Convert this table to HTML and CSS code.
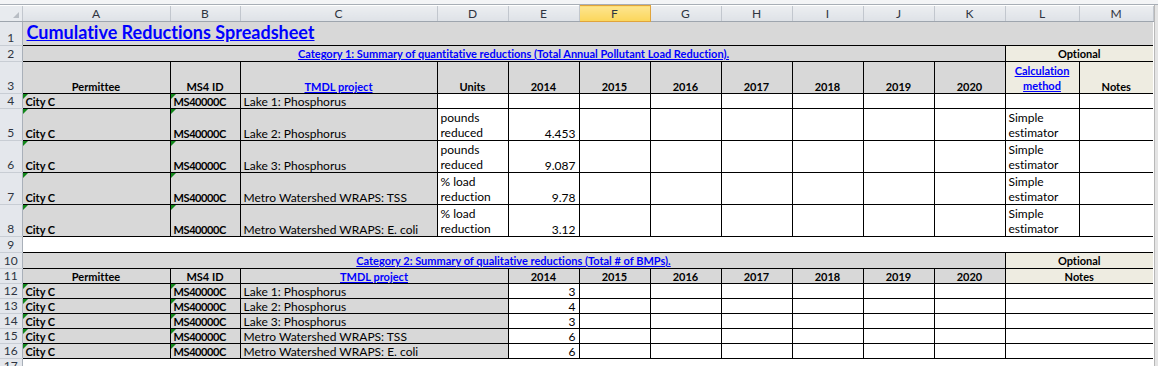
FILE: index.html
```html
<!DOCTYPE html>
<html lang="en">
  <head>
    <meta charset="UTF-8" />
    <title>Cumulative Reductions Spreadsheet</title>
    <link rel="stylesheet" href="styles.css">
  </head>
  <body>
    <div class="topbar"></div>
    <div class="workspace">
      <table class="sheet">
        <colgroup>
          <col class="w-rh"><col class="w-a"><col class="w-b"><col class="w-c">
          <col class="w-yr"><col class="w-yr"><col class="w-yr"><col class="w-yr">
          <col class="w-yr"><col class="w-yr"><col class="w-yr"><col class="w-yr">
          <col class="w-l"><col class="w-m">
        </colgroup>
        <tr class="colhead">
          <th class="corner"></th>
          <th>A</th><th>B</th><th>C</th><th>D</th><th>E</th>
          <th class="sel">F</th><th>G</th><th>H</th><th>I</th>
          <th>J</th><th>K</th><th>L</th><th>M</th>
        </tr>

        <!-- category 1 -->
        <tr class="h24">
          <th class="rh">1</th>
          <td colspan="13" class="g title"><a>Cumulative Reductions Spreadsheet</a></td>
        </tr>
        <tr class="h16">
          <th class="rh">2</th>
          <td colspan="11" class="g bx c mid bold"><a>Category 1: Summary of quantitative reductions (Total Annual Pollutant Load Reduction).</a></td>
          <td colspan="2" class="o bx c mid bold last">Optional</td>
        </tr>
        <tr class="h32">
          <th class="rh">3</th>
          <td class="g bx c bold">Permittee</td>
          <td class="g bx c bold">MS4 ID</td>
          <td class="g bx c bold"><a>TMDL project</a></td>
          <td class="g bx c bold">Units</td>
          <td class="g bx c bold">2014</td>
          <td class="g bx c bold">2015</td>
          <td class="g bx c bold">2016</td>
          <td class="g bx c bold">2017</td>
          <td class="g bx c bold">2018</td>
          <td class="g bx c bold">2019</td>
          <td class="g bx c bold">2020</td>
          <td class="o bx c bold wrap"><a>Calculation method</a></td>
          <td class="o bx c bold last">Notes</td>
        </tr>
        <tr class="h15">
          <th class="rh">4</th>
          <td class="g bx bold tri">City C</td>
          <td class="g bx bold tri id">MS40000C</td>
          <td class="g bx">Lake 1: Phosphorus</td>
          <td class="bx"></td><td class="bx"></td><td class="bx"></td><td class="bx"></td>
          <td class="bx"></td><td class="bx"></td><td class="bx"></td><td class="bx"></td>
          <td class="bx"></td><td class="bx last"></td>
        </tr>
        <tr class="h32">
          <th class="rh">5</th>
          <td class="g bx bold tri">City C</td>
          <td class="g bx bold tri id">MS40000C</td>
          <td class="g bx">Lake 2: Phosphorus</td>
          <td class="bx wrap">pounds reduced</td>
          <td class="bx r">4.453</td>
          <td class="bx"></td><td class="bx"></td><td class="bx"></td>
          <td class="bx"></td><td class="bx"></td><td class="bx"></td>
          <td class="bx wrap">Simple estimator</td><td class="bx last"></td>
        </tr>
        <tr class="h32">
          <th class="rh">6</th>
          <td class="g bx bold tri">City C</td>
          <td class="g bx bold tri id">MS40000C</td>
          <td class="g bx">Lake 3: Phosphorus</td>
          <td class="bx wrap">pounds reduced</td>
          <td class="bx r">9.087</td>
          <td class="bx"></td><td class="bx"></td><td class="bx"></td>
          <td class="bx"></td><td class="bx"></td><td class="bx"></td>
          <td class="bx wrap">Simple estimator</td><td class="bx last"></td>
        </tr>
        <tr class="h32">
          <th class="rh">7</th>
          <td class="g bx bold tri">City C</td>
          <td class="g bx bold tri id">MS40000C</td>
          <td class="g bx">Metro Watershed WRAPS: TSS</td>
          <td class="bx wrap">% load reduction</td>
          <td class="bx r">9.78</td>
          <td class="bx"></td><td class="bx"></td><td class="bx"></td>
          <td class="bx"></td><td class="bx"></td><td class="bx"></td>
          <td class="bx wrap">Simple estimator</td><td class="bx last"></td>
        </tr>
        <tr class="h32">
          <th class="rh">8</th>
          <td class="g bx bold tri">City C</td>
          <td class="g bx bold tri id">MS40000C</td>
          <td class="g bx">Metro Watershed WRAPS: E. coli</td>
          <td class="bx wrap">% load reduction</td>
          <td class="bx r">3.12</td>
          <td class="bx"></td><td class="bx"></td><td class="bx"></td>
          <td class="bx"></td><td class="bx"></td><td class="bx"></td>
          <td class="bx wrap">Simple estimator</td><td class="bx last"></td>
        </tr>
        <tr class="h16">
          <th class="rh">9</th>
          <td colspan="13"></td>
        </tr>

        <!-- category 2 -->
        <tr class="h16">
          <th class="rh">10</th>
          <td colspan="11" class="g bx c mid bold"><a>Category 2: Summary of qualitative reductions (Total # of BMPs).</a></td>
          <td colspan="2" class="o bx c mid bold last">Optional</td>
        </tr>
        <tr class="h15">
          <th class="rh">11</th>
          <td class="g bx c bold">Permittee</td>
          <td class="g bx c bold">MS4 ID</td>
          <td colspan="2" class="g bx c bold"><a>TMDL project</a></td>
          <td class="g bx c bold">2014</td>
          <td class="g bx c bold">2015</td>
          <td class="g bx c bold">2016</td>
          <td class="g bx c bold">2017</td>
          <td class="g bx c bold">2018</td>
          <td class="g bx c bold">2019</td>
          <td class="g bx c bold">2020</td>
          <td colspan="2" class="o bx c bold last">Notes</td>
        </tr>
        <tr class="h15">
          <th class="rh">12</th>
          <td class="g bx bold tri">City C</td>
          <td class="g bx bold tri id">MS40000C</td>
          <td colspan="2" class="g bx">Lake 1: Phosphorus</td>
          <td class="bx r">3</td>
          <td class="bx"></td><td class="bx"></td><td class="bx"></td>
          <td class="bx"></td><td class="bx"></td><td class="bx"></td>
          <td colspan="2" class="bx last"></td>
        </tr>
        <tr class="h15">
          <th class="rh">13</th>
          <td class="g bx bold tri">City C</td>
          <td class="g bx bold tri id">MS40000C</td>
          <td colspan="2" class="g bx">Lake 2: Phosphorus</td>
          <td class="bx r">4</td>
          <td class="bx"></td><td class="bx"></td><td class="bx"></td>
          <td class="bx"></td><td class="bx"></td><td class="bx"></td>
          <td colspan="2" class="bx last"></td>
        </tr>
        <tr class="h15">
          <th class="rh">14</th>
          <td class="g bx bold tri">City C</td>
          <td class="g bx bold tri id">MS40000C</td>
          <td colspan="2" class="g bx">Lake 3: Phosphorus</td>
          <td class="bx r">3</td>
          <td class="bx"></td><td class="bx"></td><td class="bx"></td>
          <td class="bx"></td><td class="bx"></td><td class="bx"></td>
          <td colspan="2" class="bx last"></td>
        </tr>
        <tr class="h15">
          <th class="rh">15</th>
          <td class="g bx bold tri">City C</td>
          <td class="g bx bold tri id">MS40000C</td>
          <td colspan="2" class="g bx">Metro Watershed WRAPS: TSS</td>
          <td class="bx r">6</td>
          <td class="bx"></td><td class="bx"></td><td class="bx"></td>
          <td class="bx"></td><td class="bx"></td><td class="bx"></td>
          <td colspan="2" class="bx last"></td>
        </tr>
        <tr class="h15">
          <th class="rh">16</th>
          <td class="g bx bold tri">City C</td>
          <td class="g bx bold tri id">MS40000C</td>
          <td colspan="2" class="g bx">Metro Watershed WRAPS: E. coli</td>
          <td class="bx r">6</td>
          <td class="bx"></td><td class="bx"></td><td class="bx"></td>
          <td class="bx"></td><td class="bx"></td><td class="bx"></td>
          <td colspan="2" class="bx last"></td>
        </tr>
        <tr class="h15">
          <th class="rh">17</th>
          <td colspan="13"></td>
        </tr>
      </table>
      <div class="side"></div>
    </div>
  </body>
</html>
```

FILE: styles.css
```css
body {
  margin: 0;
  background: #fff;
  font-family: Lato, "Liberation Sans", sans-serif;
  font-variant-ligatures: none;
  overflow: hidden;
}

.topbar {
  height: 4px;
  background: #f3f4f6;
  border-bottom: 1px solid #a8aeb6;
}

.workspace {
  display: flex;
}

.side {
  flex: 1;
  background: #e4e4e4;
  border-left: 1px solid #b8b8b8;
}

.sheet {
  width: 1153px;
  table-layout: fixed;
  border-collapse: collapse;
  font-size: 12px;
  color: #000;
}

.w-rh { width: 22px; }
.w-a { width: 148px; }
.w-b { width: 70px; }
.w-c { width: 197px; }
.w-yr { width: 71px; }
.w-l { width: 74px; }
.w-m { width: 74px; }

/* headers */
.colhead th {
  height: 15px;
  padding: 0;
  font-weight: normal;
  font-size: 12px;
  color: #2e3440;
  background: linear-gradient(#eceef1, #dee2e7);
  border-right: 1px solid #c2c7ce;
  border-bottom: 1px solid #9ea5ae;
  text-align: center;
  vertical-align: middle;
}

.colhead th.sel {
  background: linear-gradient(#fde58f, #fbd65a);
  border: 1px solid #e0a43c;
}

.colhead th.corner {
  position: relative;
  background: #e8ebef;
}

.corner::after {
  content: "";
  position: absolute;
  right: 3px;
  bottom: 3px;
  border-bottom: 6px solid #b8bdc4;
  border-left: 6px solid transparent;
}

.rh {
  padding: 0 0 1px 0;
  font-weight: normal;
  font-size: 12px;
  line-height: 13px;
  color: #2e3440;
  background: #e4e7ec;
  border-right: 1px solid #a9b0b9;
  border-bottom: 1px solid #c8cdd4;
  text-align: center;
  vertical-align: bottom;
}

/* rows */
.h15 { height: 15px; }
.h16 { height: 16px; }
.h24 { height: 24px; }
.h32 { height: 32px; }

td {
  padding: 0 3px;
  white-space: nowrap;
  overflow: hidden;
  vertical-align: bottom;
  line-height: 13px;
  position: relative;
}

td.g { background: #d8d8d8; }
td.o { background: #eeece1; }
td.bx { border: 1px solid #000; }
td.last { border-right: none; }
td.c { text-align: center; }
td.r { text-align: right; }
td.mid { vertical-align: middle; }

td.bold {
  font-weight: bold;
  font-size: 11px;
}

td.id { letter-spacing: -0.4px; }

td.wrap {
  white-space: normal;
  line-height: 15px;
}

td a {
  color: #0000ff;
  text-decoration: underline;
}

td.title {
  padding: 0 0 3px 4px;
  font-size: 18px;
  font-weight: bold;
  line-height: 20px;
}

td.tri::before {
  content: "";
  position: absolute;
  top: 0;
  left: 0;
  border-top: 5px solid #11861a;
  border-right: 5px solid transparent;
}
```
